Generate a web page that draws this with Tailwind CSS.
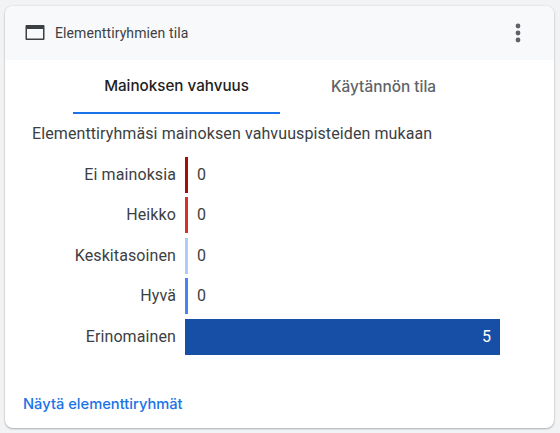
<!DOCTYPE html>
<html>
<head>
<script src="https://cdn.jsdelivr.net/npm/@tailwindcss/browser@4"></script>
</head>
<body class="bg-[#f1f3f4] font-['Roboto',sans-serif] w-[560px] h-[433px] overflow-hidden">
<div class="mt-[6px] ml-[5px] w-[549px] h-[422px] rounded-lg bg-white shadow-[0_1px_2px_rgba(60,64,67,0.35),0_0_2px_rgba(60,64,67,0.15)] overflow-hidden flex flex-col">
  <div class="h-[54px] shrink-0 bg-[#f8f9fa] flex items-center pl-[20px] pr-[33px]">
    <svg class="w-[20px] h-[16px] shrink-0 -translate-y-[0.5px]" viewBox="0 0 20 16"><path fill="#3c4043" fill-rule="evenodd" d="M1.5 0.5h17a1 1 0 0 1 1 1v13a1 1 0 0 1-1 1h-17a1 1 0 0 1-1-1v-13a1 1 0 0 1 1-1zM2 4.5v9.5h16V4.5z"/></svg>
    <span class="ml-[10px] text-[14px] tracking-[0.1px] text-[#3c4043] pt-[1px]">Elementtiryhmien tila</span>
    <svg class="ml-auto w-[6px] h-[20px]" viewBox="0 0 6 20"><circle cx="3" cy="3" r="2.4" fill="#5f6368"/><circle cx="3" cy="10" r="2.4" fill="#5f6368"/><circle cx="3" cy="17" r="2.4" fill="#5f6368"/></svg>
  </div>
  <div class="flex pl-[68px] h-[54px] shrink-0 font-['Inter',sans-serif]">
    <div class="w-[207px] border-b-2 border-[#1a73e8] flex items-center justify-center text-[15.2px] font-medium text-[#202124]">Mainoksen vahvuus</div>
    <div class="w-[207px] flex items-center justify-center text-[15.4px] font-medium text-[#5f6368] pb-[2px] pt-[2px]">Käytännön tila</div>
  </div>
  <div class="pl-[27px] mt-[10px] text-[16px] tracking-[0.1px] leading-[20px] text-[#3c4043]">Elementtiryhmäsi mainoksen vahvuuspisteiden mukaan</div>
  <div class="mt-[12.9px] flex flex-col gap-[4.5px] text-[16px] tracking-[0.1px] text-[#3c4043]">
    <div class="flex items-center h-[36px]">
      <div class="w-[171px] text-right">Ei mainoksia</div>
      <div class="ml-[9px] w-[3px] h-full bg-[#a50e0e]"></div>
      <div class="ml-[9px]">0</div>
    </div>
    <div class="flex items-center h-[36px]">
      <div class="w-[171px] text-right">Heikko</div>
      <div class="ml-[9px] w-[3px] h-full bg-[#d93025]"></div>
      <div class="ml-[9px]">0</div>
    </div>
    <div class="flex items-center h-[36px]">
      <div class="w-[171px] text-right">Keskitasoinen</div>
      <div class="ml-[9px] w-[3px] h-full bg-[#aecbfa]"></div>
      <div class="ml-[9px]">0</div>
    </div>
    <div class="flex items-center h-[36px]">
      <div class="w-[171px] text-right">Hyvä</div>
      <div class="ml-[9px] w-[3px] h-full bg-[#4285f4]"></div>
      <div class="ml-[9px]">0</div>
    </div>
    <div class="flex items-center h-[36px]">
      <div class="w-[171px] text-right">Erinomainen</div>
      <div class="ml-[9px] w-[315px] h-full bg-[#174ea6] flex items-center justify-end pr-[9px] text-white">5</div>
    </div>
  </div>
  <div class="mt-[39px] pl-[18px] font-['Inter',sans-serif] text-[14.7px] font-medium leading-[20px] text-[#1a73e8]">Näytä elementtiryhmät</div>
</div>
</body>
</html>
